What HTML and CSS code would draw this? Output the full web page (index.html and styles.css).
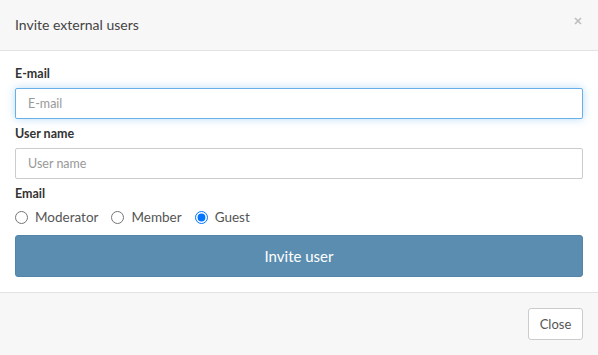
FILE: index.html
```html
<!DOCTYPE html>
<html>
<head>
<meta charset="utf-8">
<link rel="stylesheet" href="styles.css">
</head>
<body>
<div class="modal">
  <div class="modal-header">
    <div class="modal-title">Invite external users</div>
    <span class="close"><svg width="8" height="8" viewBox="0 0 8 8"><path d="M1 1L7 7M7 1L1 7" stroke="#bdbdbd" stroke-width="1.6"/></svg></span>
  </div>
  <div class="modal-body">
    <div class="group">
      <label class="label">E-mail</label>
      <input class="input focused" type="text" placeholder="E-mail">
    </div>
    <div class="group">
      <label class="label">User name</label>
      <input class="input" type="text" placeholder="User name">
    </div>
    <div class="group">
      <label class="label">Email</label>
      <div class="radios">
        <label class="radio"><input type="radio" name="role"> Moderator</label>
        <label class="radio"><input type="radio" name="role"> Member</label>
        <label class="radio"><input type="radio" name="role" checked> Guest</label>
      </div>
    </div>
    <button class="invite">Invite user</button>
  </div>
  <div class="modal-footer">
    <button class="btn-close">Close</button>
  </div>
</div>
</body>
</html>
```
FILE: styles.css
```css
html, body { margin: 0; padding: 0; }
body {
  font-family: Lato, "Open Sans", sans-serif;
  color: #333;
  background: #fff;
  width: 598px;
  height: 355px;
  overflow: hidden;
}
.modal { display: flex; flex-direction: column; height: 355px; }
.modal-header {
  background: #f7f7f7;
  border-bottom: 1px solid #e3e3e3;
  display: flex;
  align-items: center;
  justify-content: space-between;
  padding: 0 16px 2px 15px;
  box-sizing: border-box;
  height: 51px;
}
.modal-title { font-size: 14px; color: #444; }
.close { display: flex; margin-top: -6px; }
.modal-body {
  padding: 13px 15px 15px;
  display: flex;
  flex-direction: column;
}
.group { display: flex; flex-direction: column; margin-bottom: 5px; }
.label {
  font-size: 12.5px;
  font-weight: bold;
  color: #333;
  line-height: 18px;
  padding-top: 1px;
  margin-bottom: 5px;
}
.input {
  height: 31px;
  box-sizing: border-box;
  border: 1px solid #ccc;
  border-radius: 2px;
  padding: 0 12px;
  font-family: Lato, "Open Sans", sans-serif;
  font-size: 12.5px;
  color: #555;
  outline: none;
  margin: 0;
}
.input::placeholder { color: #999; }
.input.focused {
  border-color: #66afe9;
  box-shadow: 0 0 8px rgba(102, 175, 233, 0.45);
}
.radios { display: flex; gap: 13px; line-height: 18px; margin-bottom: 4px; }
.radio {
  font-size: 13.5px;
  color: #555;
  display: flex;
  align-items: center;
  gap: 7px;
}
.radio input {
  margin: 0;
  width: 13px;
  height: 13px;
}
.invite {
  height: 42px;
  border: 1px solid #5285a9;
  border-radius: 3px;
  background: #5b8db0;
  color: #fff;
  font-family: Lato, "Open Sans", sans-serif;
  font-size: 15px;
  margin: 0;
}
.modal-footer {
  flex: 1;
  background: #f7f7f7;
  border-top: 1px solid #e3e3e3;
  display: flex;
  justify-content: flex-end;
  align-items: flex-start;
  padding: 15px 15px 0;
}
.btn-close {
  height: 32px;
  width: 55px;
  background: #fff;
  border: 1px solid #ccc;
  border-radius: 3px;
  color: #555;
  font-family: Lato, "Open Sans", sans-serif;
  font-size: 13px;
  margin: 0;
}
```
